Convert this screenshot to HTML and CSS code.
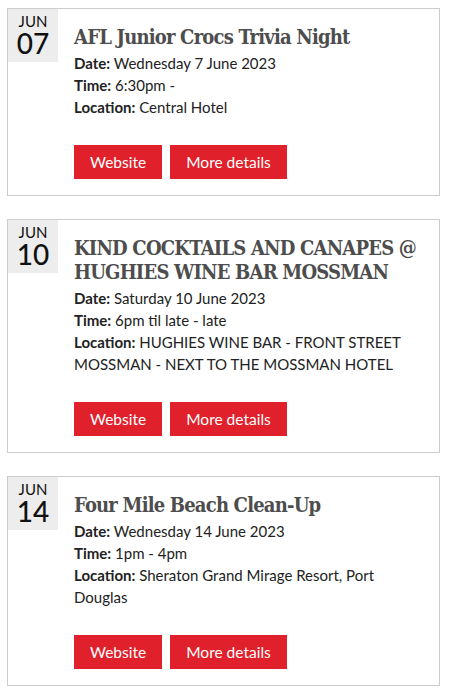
FILE: index.html
```html
<!DOCTYPE html>
<html lang="en">
<head>
    <meta charset="UTF-8">
    <title>Events</title>
    <link rel="stylesheet" href="styles.css">
</head>
<body>

    <div class="event">
        <div class="event-date">
            <span class="month">JUN</span>
            <span class="day">07</span>
        </div>
        <div class="event-body">
            <h3 class="event-title">AFL Junior Crocs Trivia Night</h3>
            <p><strong>Date:</strong> Wednesday 7 June 2023</p>
            <p><strong>Time:</strong> 6:30pm -</p>
            <p><strong>Location:</strong> Central Hotel</p>
            <div class="buttons">
                <a class="button" href="#">Website</a>
                <a class="button" href="#">More details</a>
            </div>
        </div>
    </div>

    <div class="event">
        <div class="event-date">
            <span class="month">JUN</span>
            <span class="day">10</span>
        </div>
        <div class="event-body">
            <h3 class="event-title">KIND COCKTAILS AND CANAPES @ HUGHIES WINE BAR MOSSMAN</h3>
            <p><strong>Date:</strong> Saturday 10 June 2023</p>
            <p><strong>Time:</strong> 6pm til late - late</p>
            <p><strong>Location:</strong> HUGHIES WINE BAR - FRONT STREET MOSSMAN - NEXT TO THE MOSSMAN HOTEL</p>
            <div class="buttons">
                <a class="button" href="#">Website</a>
                <a class="button" href="#">More details</a>
            </div>
        </div>
    </div>

    <div class="event">
        <div class="event-date">
            <span class="month">JUN</span>
            <span class="day">14</span>
        </div>
        <div class="event-body">
            <h3 class="event-title">Four Mile Beach Clean-Up</h3>
            <p><strong>Date:</strong> Wednesday 14 June 2023</p>
            <p><strong>Time:</strong> 1pm - 4pm</p>
            <p><strong>Location:</strong> Sheraton Grand Mirage Resort, Port Douglas</p>
            <div class="buttons">
                <a class="button" href="#">Website</a>
                <a class="button" href="#">More details</a>
            </div>
        </div>
    </div>

</body>
</html>
```

FILE: styles.css
```css
body {
    font-family: Lato, "Noto Sans", sans-serif;
    font-size: 15px;
    color: #222;
    background: #fff;
    margin: 8px 9px 0 7px;
}

/* Event card */
.event {
    display: flex;
    border: 1px solid #ccc;
    margin-bottom: 23px;
}

.event-date {
    flex: none;
    width: 50px;
    height: 53px;
    background: #ededed;
    text-align: center;
    color: #111;
}

.event-date .month {
    display: block;
    font-size: 15px;
    line-height: 15px;
    padding-top: 5px;
}

.event-date .day {
    display: block;
    font-size: 28px;
    line-height: 28px;
    font-weight: 500;
}

.event-body {
    flex: 1;
    padding: 16px 10px 16px 16px;
}

.event-title {
    font-family: "DejaVu Serif", serif;
    font-stretch: condensed;
    font-size: 20px;
    line-height: 24px;
    letter-spacing: -0.8px;
    font-weight: bold;
    color: #4d4d4d;
    margin: 0 0 3px;
}

.event-body p {
    margin: 0;
    line-height: 22px;
}

.event-body strong {
    font-weight: bold;
}

.buttons {
    display: flex;
    gap: 8px;
    margin-top: 27px;
}

.button {
    display: block;
    height: 34px;
    line-height: 34px;
    padding: 0 16px;
    background: #e0202a;
    color: #fff;
    text-decoration: none;
    font-size: 15.5px;
}
```
